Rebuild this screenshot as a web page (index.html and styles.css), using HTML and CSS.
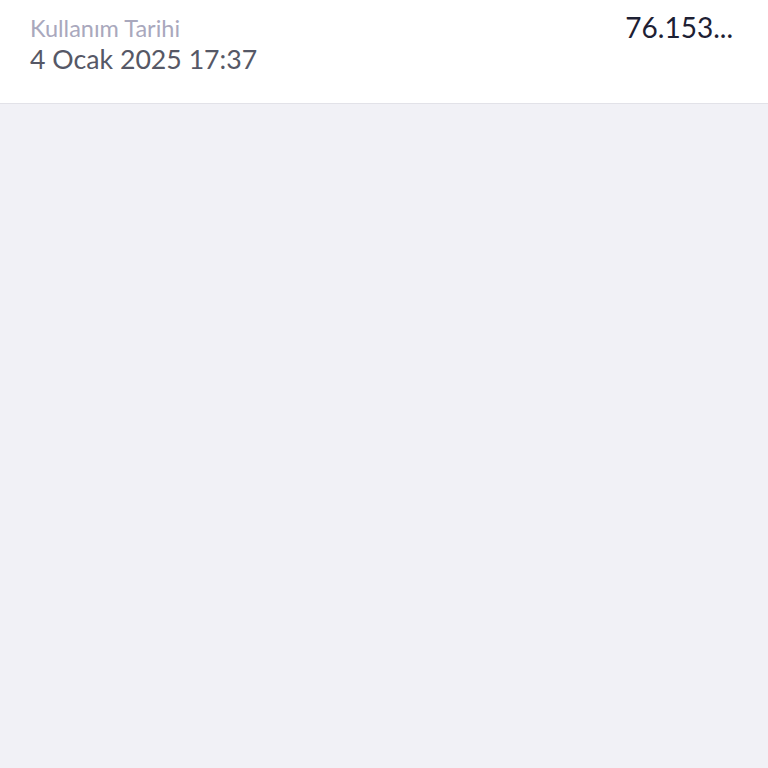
FILE: index.html
```html
<!DOCTYPE html>
<html>
<head>
    <title>Kullanım Detayı</title>
    <link rel="stylesheet" href="styles.css">
</head>
<body>
    <div class="usage-row">
        <div class="usage-info">
            <span class="usage-label">Kullanım Tarihi</span>
            <span class="usage-date">4 Ocak 2025 17:37</span>
        </div>
        <div class="usage-amount">76.153...</div>
    </div>
</body>
</html>
```

FILE: styles.css
```css
body { margin: 0; background: #f1f1f6; font-family: Lato, "Noto Sans", sans-serif; }
.usage-row { display: flex; justify-content: space-between; align-items: flex-start; background: #fff; padding: 13px 35px 0 30px; height: 90px; border-bottom: 1px solid #e2e2e8; }
.usage-info { display: flex; flex-direction: column; }
.usage-label { font-size: 23.5px; line-height: 30px; color: #a9a8bd; }
.usage-date { font-size: 26.7px; line-height: 33px; color: #565866; }
.usage-amount { font-size: 28px; line-height: 28px; color: #1d2033; }
```
